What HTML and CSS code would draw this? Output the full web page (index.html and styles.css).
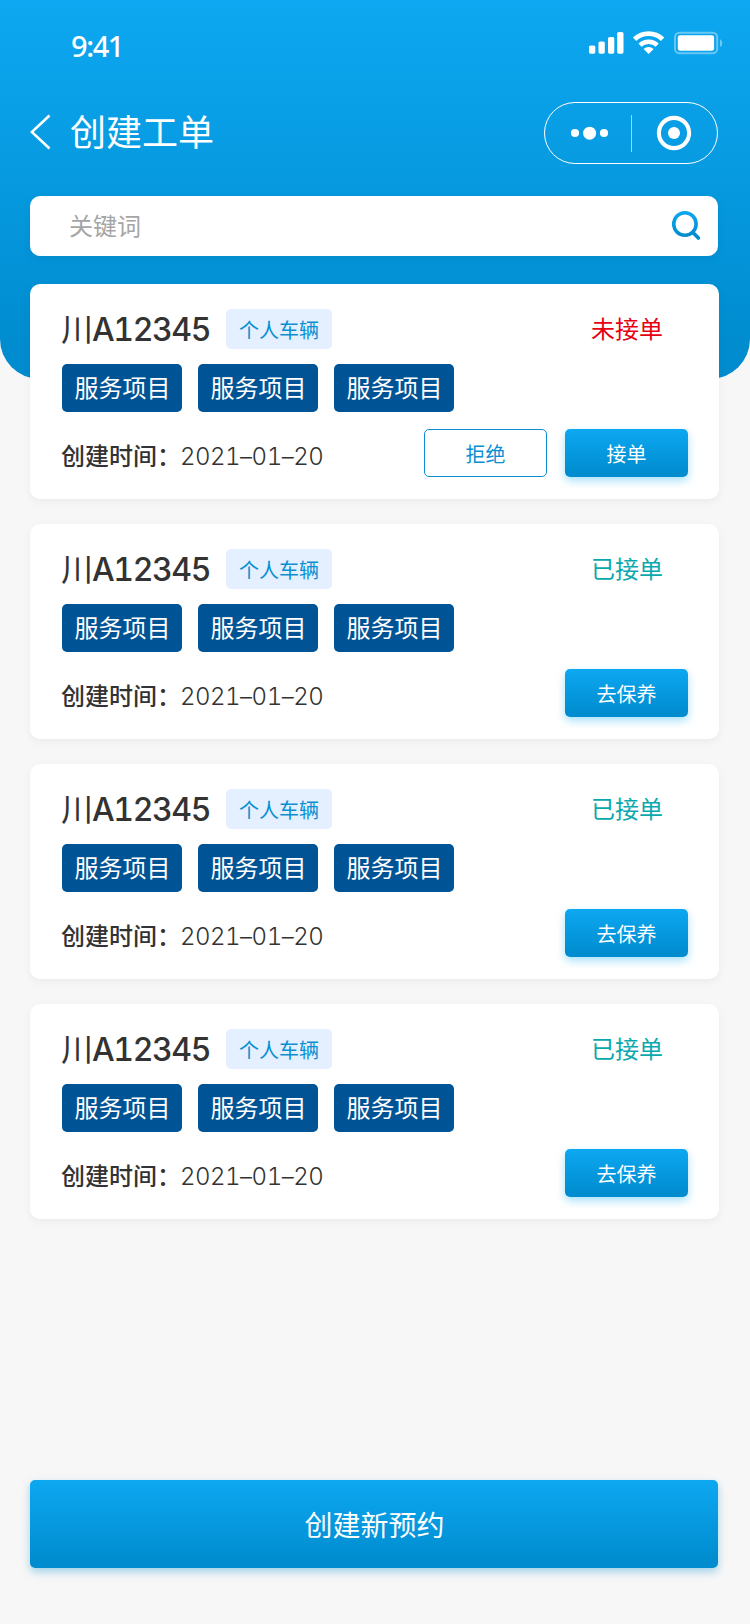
FILE: index.html
```html
<!DOCTYPE html>
<html lang="zh-CN">
<head>
  <meta charset="UTF-8">
  <meta name="viewport" content="width=device-width, initial-scale=1.0">
  <title>创建工单</title>
  <link rel="stylesheet" href="styles.css">
</head>
<body>
  <header>
    <div class="status-bar">
      <span class="time">9:41</span>
      <svg class="status-icons" width="134" height="24" viewBox="0 0 134 24" fill="#fff">
        <!-- signal -->
        <rect x="0" y="14.5" width="6.3" height="8.2" rx="1.6"/>
        <rect x="9.5" y="10.5" width="6.3" height="12.2" rx="1.6"/>
        <rect x="19" y="6" width="6.3" height="16.7" rx="1.6"/>
        <rect x="28.2" y="1" width="6.3" height="21.7" rx="1.6"/>
        <!-- wifi -->
        <g fill="none" stroke="#fff" stroke-width="4.4">
          <path d="M45.6 8.2a20.5 20.5 0 0 1 28 0" stroke-width="4.8"/>
          <path d="M51 14.2a12.6 12.6 0 0 1 17.2 0"/>
        </g>
        <path d="M59.6 23l-5-5a7.3 7.3 0 0 1 10 0z"/>
        <!-- battery -->
        <rect x="86" y="1.7" width="42.2" height="20.6" rx="4.5" fill="none" stroke="#fff" stroke-opacity=".38" stroke-width="2"/>
        <path d="M131 8.3c3 1.6 3 6.2 0 7.8z" fill-opacity=".4"/>
        <rect x="88.8" y="4.2" width="36.3" height="15.6" rx="2.4"/>
      </svg>
    </div>
    <div class="nav-bar">
      <svg class="back" width="22" height="36" viewBox="0 0 22 36">
        <path d="M19.5 1.5L1.8 18l17.7 16.5" fill="none" stroke="#fff" stroke-width="2.6"/>
      </svg>
      <h1>创建工单</h1>
      <svg class="capsule" width="174" height="62" viewBox="0 0 174 62" fill="#fff">
        <rect x=".5" y=".5" width="173" height="61" rx="30.5" fill="none" stroke="#fff"/>
        <circle cx="31" cy="31" r="4.1"/>
        <circle cx="45.6" cy="31.2" r="6.5"/>
        <circle cx="60" cy="31" r="4.1"/>
        <rect x="87" y="13" width="1" height="37" fill-opacity=".6"/>
        <circle cx="130" cy="31" r="15.1" fill="none" stroke="#fff" stroke-width="4.1"/>
        <circle cx="130" cy="31" r="6"/>
      </svg>
    </div>
    <div class="search">
      <input type="text" placeholder="关键词">
      <svg width="29" height="30" viewBox="0 0 29 30">
        <defs>
          <linearGradient id="blue" gradientUnits="userSpaceOnUse" x1="0" y1="0" x2="0" y2="30">
            <stop offset="0" stop-color="#0da8f1"/>
            <stop offset=".85" stop-color="#008ccf"/>
          </linearGradient>
        </defs>
        <g fill="none" stroke="url(#blue)" stroke-width="3.6">
          <circle cx="12.9" cy="13" r="11.2"/>
          <path d="M21.2 21.8l5.2 5.2" stroke-linecap="round"/>
        </g>
      </svg>
    </div>
  </header>

  <main>
    <div class="card">
      <div class="card-top">
        <span class="plate">川<b>A12345</b></span>
        <span class="type">个人车辆</span>
        <span class="status pending">未接单</span>
      </div>
      <div class="services">
        <span>服务项目</span>
        <span>服务项目</span>
        <span>服务项目</span>
      </div>
      <div class="card-bottom">
        <span class="label">创建时间：</span>
        <span class="date">2021–01–20</span>
        <button class="btn btn-outline">拒绝</button>
        <button class="btn">接单</button>
      </div>
    </div>

    <div class="card">
      <div class="card-top">
        <span class="plate">川<b>A12345</b></span>
        <span class="type">个人车辆</span>
        <span class="status">已接单</span>
      </div>
      <div class="services">
        <span>服务项目</span>
        <span>服务项目</span>
        <span>服务项目</span>
      </div>
      <div class="card-bottom">
        <span class="label">创建时间：</span>
        <span class="date">2021–01–20</span>
        <button class="btn">去保养</button>
      </div>
    </div>

    <div class="card">
      <div class="card-top">
        <span class="plate">川<b>A12345</b></span>
        <span class="type">个人车辆</span>
        <span class="status">已接单</span>
      </div>
      <div class="services">
        <span>服务项目</span>
        <span>服务项目</span>
        <span>服务项目</span>
      </div>
      <div class="card-bottom">
        <span class="label">创建时间：</span>
        <span class="date">2021–01–20</span>
        <button class="btn">去保养</button>
      </div>
    </div>

    <div class="card">
      <div class="card-top">
        <span class="plate">川<b>A12345</b></span>
        <span class="type">个人车辆</span>
        <span class="status">已接单</span>
      </div>
      <div class="services">
        <span>服务项目</span>
        <span>服务项目</span>
        <span>服务项目</span>
      </div>
      <div class="card-bottom">
        <span class="label">创建时间：</span>
        <span class="date">2021–01–20</span>
        <button class="btn">去保养</button>
      </div>
    </div>
  </main>

  <footer>
    <button class="create-btn">创建新预约</button>
  </footer>
</body>
</html>
```
FILE: styles.css
```css
* {
  box-sizing: border-box;
}
body {
  margin: 0;
  width: 750px;
  height: 1624px;
  display: flex;
  flex-direction: column;
  background: #f7f7f7;
  color: #333;
  font-family: "Noto Sans CJK SC", sans-serif;
}
button, input {
  font-family: inherit;
  border: none;
}
h1 {
  margin: 0;
}

/* header */
header {
  height: 379px;
  padding: 31px 32px 0 30px;
  border-radius: 0 0 40px 40px;
  background: linear-gradient(#0da8f1, #008ccf 92%);
}
.status-bar {
  height: 32px;
  margin-left: 41px;
  margin-right: -5px;
  display: flex;
  justify-content: space-between;
}
.time {
  font-family: "Noto Sans", sans-serif;
  font-size: 29px;
  font-weight: 500;
  line-height: 30px;
  letter-spacing: -1.4px;
  color: #fff;
}
.nav-bar {
  height: 62px;
  margin-top: 39px;
  display: flex;
  align-items: center;
}
.back {
  margin-bottom: 3px;
}
.nav-bar h1 {
  flex: 1;
  margin-left: 18px;
  padding-bottom: 5px;
  font-size: 36px;
  font-weight: 400;
  line-height: 57px;
  color: #fff;
}
.search {
  height: 60px;
  margin-top: 32px;
  padding: 0 17px 0 39px;
  display: flex;
  align-items: center;
  border-radius: 10px;
  background: #fff;
  box-shadow: 0 3px 10px rgba(0,0,0,0.06);
}
.search input {
  flex: 1;
  height: 60px;
  padding: 0 0 3px;
  font-size: 24px;
  background: none;
  outline: none;
}
.search input::placeholder {
  color: #a5a5a5;
}

/* order cards */
main {
  margin: -95px 31px 0 30px;
  display: flex;
  flex-direction: column;
  gap: 25px;
}
.card {
  height: 215px;
  padding: 25px 31px 0 32px;
  border-radius: 10px;
  background: #fff;
  box-shadow: 0 3px 10px rgba(0,0,0,0.05);
}
.card-top {
  height: 40px;
  display: flex;
  align-items: center;
}
.plate {
  width: 165px;
  margin-left: -1px;
  padding-bottom: 1px;
  font-size: 32px;
  font-weight: 400;
  line-height: 38px;
  white-space: nowrap;
}
.plate b {
  margin-left: -1px;
  font-family: Inter, sans-serif;
  font-size: 32px;
  font-weight: 450;
  font-variant-numeric: tabular-nums;
  letter-spacing: -1.4px;
}
.type {
  width: 106px;
  height: 40px;
  padding-top: 1px;
  line-height: 40px;
  border-radius: 5px;
  text-align: center;
  font-size: 20px;
  color: #0a8fd3;
  background: #e4efff;
}
.status {
  margin-left: auto;
  margin-right: 25px;
  padding-bottom: 2px;
  font-size: 24px;
  line-height: 38px;
  color: #0aa8ad;
}
.status.pending {
  color: #e60012;
}
.services {
  margin-top: 15px;
  display: flex;
  gap: 16px;
}
.services span {
  width: 120px;
  height: 48px;
  padding-left: 1px;
  line-height: 46px;
  border-radius: 5px;
  text-align: center;
  font-size: 24px;
  color: #fff;
  background: #005495;
}
.card-bottom {
  margin-top: 17px;
  height: 48px;
  display: flex;
  align-items: center;
}
.label {
  margin-left: -1px;
  padding-top: 4px;
  font-size: 24px;
  font-weight: 500;
  line-height: 48px;
}
.date {
  flex: 1;
  margin-left: -1px;
  padding-top: 8px;
  font-family: Inter, sans-serif;
  font-size: 24px;
  font-weight: 300;
  line-height: 48px;
  font-variant-numeric: tabular-nums;
  letter-spacing: -0.5px;
}
.btn {
  width: 123px;
  height: 48px;
  margin-left: 18px;
  padding: 0;
  border-radius: 5px;
  font-size: 20px;
  color: #fff;
  background: linear-gradient(#0da8f1, #008ccf 92%);
  box-shadow: 0 4px 9px rgba(13,168,241,0.35);
}
.btn-outline {
  border: 1px solid #0a8fd3;
  color: #0a8fd3;
  background: #fff;
  box-shadow: none;
}

/* bottom button */
footer {
  margin-top: auto;
  padding: 0 32px 56px 30px;
}
.create-btn {
  display: block;
  width: 100%;
  height: 88px;
  padding: 0 0 0 1px;
  border-radius: 5px;
  font-size: 28px;
  color: #fff;
  background: linear-gradient(#0da8f1, #008ccf 92%);
  box-shadow: 0 4px 9px rgba(0,140,207,0.35);
}
```
